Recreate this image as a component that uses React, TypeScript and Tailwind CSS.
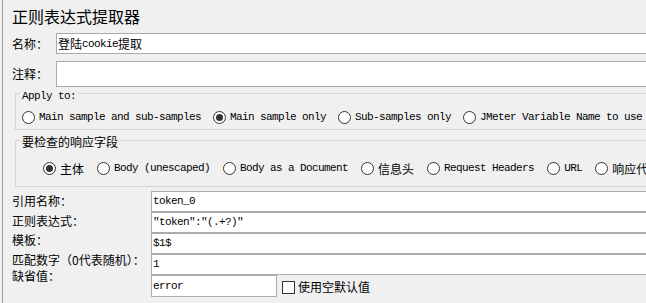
import React from "react";

const MONO = "[font-family:'Liberation_Mono',monospace] text-[11px] tracking-[-0.6px]";

function Mono({ children }: { children: React.ReactNode }) {
  return <span className={MONO}>{children}</span>;
}

function Radio({ checked }: { checked?: boolean }) {
  return (
    <span className="flex h-[13px] w-[13px] shrink-0 items-center justify-center rounded-full border border-[#333333] bg-white">
      {checked && <span className="h-[7px] w-[7px] rounded-full bg-[#333333]" />}
    </span>
  );
}

function Opt({ checked, children, cjk }: { checked?: boolean; children: React.ReactNode; cjk?: boolean }) {
  return (
    <div className="flex h-[13px] shrink-0 items-center gap-[4px] whitespace-nowrap">
      <Radio checked={checked} />
      {cjk ? (
        <span className="text-[12px] leading-[13px]">{children}</span>
      ) : (
        <span className={MONO + " leading-[13px]"}>{children}</span>
      )}
    </div>
  );
}

function Field({ children }: { children?: React.ReactNode }) {
  return (
    <div className="flex h-[21px] items-center border border-[#ababab] bg-white pl-[1px] text-black">
      <span className={MONO + " leading-[13px] whitespace-pre"}>{children}</span>
    </div>
  );
}

export default function App() {
  return (
    <div className="h-[303px] w-[646px] overflow-hidden bg-[#f0f0f0] text-black [font-family:'Noto_Sans_CJK_SC',sans-serif]">
      <div className="ml-[2px] h-full w-[760px] border-l border-[#a0a0a0] pl-[9px]">
        <div className="h-[26px] pt-[6px] text-[16px] leading-[20px]">正则表达式提取器</div>

        <div className="mt-[7px] flex h-[21px] items-center">
          <div className="w-[44px] text-[12px] leading-[14px]">名称：</div>
          <div className="flex h-full flex-1 items-center border border-[#ababab] bg-white pl-[1px] text-[12px] leading-[14px]">
            登陆<Mono>cookie</Mono>提取
          </div>
        </div>

        <div className="mt-[7px] flex h-[26px] items-center">
          <div className="w-[44px] text-[12px] leading-[14px]">注释：</div>
          <div className="h-full flex-1 border border-[#ababab] bg-white" />
        </div>

        <fieldset className="m-0 ml-[3px] min-w-0 border border-[#d5d5d5] p-0 pb-[5px]">
          <legend className={"ml-[4px] h-[12px] px-[2px] leading-[12px] " + MONO}>
            <span className="inline-block translate-y-[3px]">Apply to:</span>
          </legend>
          <div className="mt-[12px] flex h-[13px] items-center gap-[12px] pl-[6px]">
            <Opt>Main sample and sub-samples</Opt>
            <Opt checked>Main sample only</Opt>
            <Opt>Sub-samples only</Opt>
            <Opt>JMeter Variable Name to use</Opt>
          </div>
        </fieldset>

        <fieldset className="m-0 ml-[3px] mt-[3px] min-w-0 border border-[#d5d5d5] p-0 pb-[11px]">
          <legend className="ml-[4px] h-[14px] px-[2px] text-[12px] leading-[14px]">
            <span className="inline-block translate-y-[2px]">要检查的响应字段</span>
          </legend>
          <div className="mt-[15px] flex h-[13px] items-center gap-[13px] pl-[27px]">
            <Opt checked cjk>主体</Opt>
            <Opt>Body (unescaped)</Opt>
            <Opt>Body as a Document</Opt>
            <Opt cjk>信息头</Opt>
            <Opt>Request Headers</Opt>
            <Opt>URL</Opt>
            <Opt cjk>响应代码</Opt>
          </div>
        </fieldset>

        <div className="mt-[4px] flex">
          <div className="w-[139px] shrink-0 whitespace-nowrap text-[12px] leading-[14px]">
            <div className="flex h-[20px] items-center">引用名称：</div>
            <div className="flex h-[19px] items-center">正则表达式：</div>
            <div className="flex h-[20px] items-center">模板：</div>
            <div className="flex h-[19px] items-center">匹配数字（0代表随机）：</div>
            <div className="flex h-[14px] items-center">缺省值：</div>
          </div>
          <div className="flex flex-1 flex-col">
            <Field>token_0</Field>
            <Field>"token":"(.+?)"</Field>
            <Field>$1$</Field>
            <Field>1</Field>
            <div className="flex">
              <div className="flex h-[22px] w-[126px] items-center border border-[#ababab] bg-white pl-[1px]">
                <span className={MONO + " leading-[13px]"}>error</span>
              </div>
              <span className="ml-[5px] mt-[6px] h-[13px] w-[13px] border border-[#333333] bg-white" />
              <span className="ml-[3px] mt-[5px] text-[12px] leading-[14px]">使用空默认值</span>
            </div>
          </div>
        </div>
      </div>
    </div>
  );
}
